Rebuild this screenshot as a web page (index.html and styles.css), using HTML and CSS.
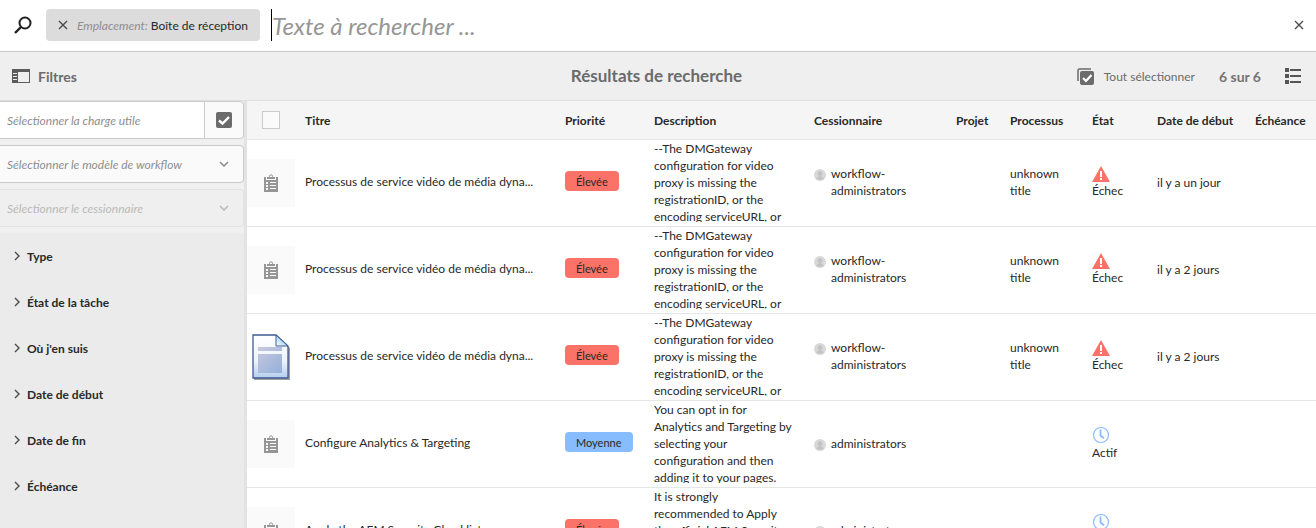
FILE: index.html
```html
<!DOCTYPE html>
<html lang="fr">
<head>
<meta charset="utf-8">
<title>Résultats de recherche</title>
<meta name="viewport" content="width=device-width, initial-scale=1">
<link rel="stylesheet" href="styles.css">
</head>
<body>
<svg class="defs" aria-hidden="true">
  <symbol id="i-close" viewBox="0 0 10 10"><path d="M1 1l8 8M9 1l-8 8" fill="none" stroke="currentColor" stroke-width="1.4"/></symbol>
  <symbol id="i-down" viewBox="0 0 10 6"><path d="M1 1l4 4 4-4" fill="none" stroke="currentColor" stroke-width="1.6"/></symbol>
  <symbol id="i-right" viewBox="0 0 6 10"><path d="M1 1l4 4-4 4" fill="none" stroke="currentColor" stroke-width="1.4"/></symbol>
  <symbol id="i-task" viewBox="0 0 14 18"><path fill="currentColor" fill-rule="evenodd" d="M0 3h2v3h10V3h2v15H0zM2 8v2h2V8zm4 0v1h6V8zM2 11v2h2v-2zm4 0v1h6v-1zM2 14v2h2v-2zm4 0v1h6v-1zM3 3h8v2H3z"/><circle cx="7" cy="2.400" r="1.600" fill="none" stroke="currentColor"/></symbol>
  <symbol id="i-alert" viewBox="0 0 18 16"><path fill="currentColor" d="M9 0l9 16H0z"/><path fill="#fff" d="M8 5h2v6H8zM8 12h2v2H8z"/></symbol>
  <symbol id="i-clock" viewBox="0 0 18 18"><circle cx="9" cy="9" r="7.500" fill="none" stroke="currentColor" stroke-width="1.200"/><path d="M8.500 3.500v6l3.500 2.800" fill="none" stroke="currentColor" stroke-width="1.800"/></symbol>
  <symbol id="i-user" viewBox="0 0 12 12"><circle cx="6" cy="6" r="6" fill="#d9d9d9"/><path fill="#c4c4c4" d="M6 2a2.300 2.600 0 0 1 1.300 4.800v1L10 9a5 5 0 0 1-8 0l2.700-1.200v-1A2.300 2.600 0 0 1 6 2z"/></symbol>
</svg>

<header class="search">
  <svg class="search-icon" viewBox="0 0 18 18" aria-hidden="true"><circle cx="11" cy="7" r="5.500" fill="none" stroke="#222" stroke-width="2"/><path d="M7 11l-6 6" stroke="#222" stroke-width="2.400"/></svg>
  <div class="tag">
    <button type="button" class="icon-btn" aria-label="Supprimer"><svg class="x"><use href="#i-close"/></svg></button>
    <span><em>Emplacement:</em> Boîte de réception</span>
  </div>
  <input class="query" type="text" aria-label="Recherche" placeholder="Texte à rechercher ...">
  <button type="button" class="icon-btn" aria-label="Fermer"><svg class="x"><use href="#i-close"/></svg></button>
</header>

<div class="bar">
  <button type="button" class="toggle">
    <svg class="rail" viewBox="0 0 18 14" aria-hidden="true"><path fill="#5c5c5c" fill-rule="evenodd" d="M0 0h18v14H0zM6 3v10h11V3z"/><path stroke="#efefef" d="M1 4.500h4M1 7.500h4M1 10.500h4"/></svg>
    Filtres
  </button>
  <h1>Résultats de recherche</h1>
  <div class="tools">
    <button type="button" class="select-all">
      <svg class="multi" viewBox="0 0 17 17" aria-hidden="true"><path d="M1 13V2.500A1.500 1.500 0 0 1 2.500 1H14" fill="none" stroke="#6b6b6b" stroke-width="1.500"/><rect x="3" y="3" width="14" height="14" rx="2" fill="#6b6b6b"/><path d="M6 10l3 3 5.500-6" fill="none" stroke="#fff" stroke-width="2.200"/></svg>
      Tout sélectionner
    </button>
    <strong>6 sur 6</strong>
    <button type="button" class="icon-btn" aria-label="Vue Liste"><svg class="list" viewBox="0 0 16 16"><path fill="#555" d="M0 0h4v4H0zM0 6h4v4H0zM0 12h4v4H0zM5 1h11v2H5zM5 7h11v2H5zM5 13h11v2H5z"/></svg></button>
  </div>
</div>

<main class="layout">
  <aside class="filters">
    <div class="fields">
      <div class="field path">
        <input type="text" aria-label="Charge utile" placeholder="Sélectionner la charge utile">
        <button type="button" aria-label="Parcourir"><svg class="check" viewBox="0 0 16 16"><rect width="16" height="16" rx="2" fill="#6b6b6b"/><path d="M3 8.500l3.500 3L13 5" fill="none" stroke="#fff" stroke-width="2.400"/></svg></button>
      </div>
      <div class="field pick">
        <select aria-label="Modèle de workflow"><option>Sélectionner le modèle de workflow</option></select>
        <svg class="down" viewBox="0 0 10 6" aria-hidden="true"><use href="#i-down"/></svg>
      </div>
      <div class="field pick disabled">
        <select aria-label="Cessionnaire" disabled><option>Sélectionner le cessionnaire</option></select>
        <svg class="down" viewBox="0 0 10 6" aria-hidden="true"><use href="#i-down"/></svg>
      </div>
    </div>
    <details><summary><svg class="right"><use href="#i-right"/></svg>Type</summary></details>
    <details><summary><svg class="right"><use href="#i-right"/></svg>État de la tâche</summary></details>
    <details><summary><svg class="right"><use href="#i-right"/></svg>Où j'en suis</summary></details>
    <details><summary><svg class="right"><use href="#i-right"/></svg>Date de début</summary></details>
    <details><summary><svg class="right"><use href="#i-right"/></svg>Date de fin</summary></details>
    <details><summary><svg class="right"><use href="#i-right"/></svg>Échéance</summary></details>
  </aside>

  <section class="results">
    <table>
      <colgroup><col class="c-pick"><col class="c-title"><col class="c-prio"><col class="c-desc"><col class="c-who"><col class="c-proj"><col class="c-proc"><col class="c-state"><col class="c-start"><col class="c-due"></colgroup>
      <thead>
        <tr><th class="pick-cell"><input type="checkbox" aria-label="Tout sélectionner"></th><th>Titre</th><th>Priorité</th><th>Description</th><th>Cessionnaire</th><th>Projet</th><th>Processus</th><th>État</th><th>Date de début</th><th>Échéance</th></tr>
      </thead>
      <tbody>
        <tr>
          <td class="pick-cell"><div class="thumb"><svg class="task"><use href="#i-task"/></svg></div></td>
          <td class="title">Processus de service vidéo de média dyna...</td>
          <td class="prio"><span class="badge high">Élevée</span></td>
          <td class="desc"><div>--The DMGateway configuration for video proxy is missing the registrationID, or the encoding serviceURL, or</div></td>
          <td><div class="who"><svg class="user"><use href="#i-user"/></svg><span>workflow-administrators</span></div></td>
          <td></td><td>unknown title</td>
          <td><div class="state"><svg class="alert" viewBox="0 0 18 16"><use href="#i-alert"/></svg>Échec</div></td>
          <td class="date">il y a un jour</td><td></td>
        </tr>
        <tr>
          <td class="pick-cell"><div class="thumb"><svg class="task"><use href="#i-task"/></svg></div></td>
          <td class="title">Processus de service vidéo de média dyna...</td>
          <td class="prio"><span class="badge high">Élevée</span></td>
          <td class="desc"><div>--The DMGateway configuration for video proxy is missing the registrationID, or the encoding serviceURL, or</div></td>
          <td><div class="who"><svg class="user"><use href="#i-user"/></svg><span>workflow-administrators</span></div></td>
          <td></td><td>unknown title</td>
          <td><div class="state"><svg class="alert" viewBox="0 0 18 16"><use href="#i-alert"/></svg>Échec</div></td>
          <td class="date">il y a 2 jours</td><td></td>
        </tr>
        <tr>
          <td class="pick-cell"><div class="thumb plain">
            <svg class="page" viewBox="0 0 38 46">
              <defs>
                <linearGradient id="paper" x1="0" y1="0" x2="0" y2="1"><stop offset="0" stop-color="#fff"/><stop offset=".6" stop-color="#eef4fb"/><stop offset="1" stop-color="#b4cdec"/></linearGradient>
                <linearGradient id="block" gradientUnits="userSpaceOnUse" x1="6" y1="13" x2="30" y2="39"><stop offset="0" stop-color="#c9c9de"/><stop offset="1" stop-color="#94b0dc"/></linearGradient>
                <linearGradient id="fold" x1="0" y1="1" x2="1" y2="0"><stop offset="0" stop-color="#fff"/><stop offset="1" stop-color="#5fb4e4"/></linearGradient>
              </defs>
              <path d="M2 2h23l13 12v32H2z" fill="#888" opacity=".8"/>
              <path d="M1 1h23l12 11v32H1z" fill="url(#paper)" stroke="#3f5a94" stroke-width="1.300"/>
              <path d="M24 1v11h12z" fill="url(#fold)" stroke="#3f5a94"/>
              <path d="M6 13h24v4H6zM6 20h24v19H6z" fill="url(#block)"/>
            </svg></div></td>
          <td class="title">Processus de service vidéo de média dyna...</td>
          <td class="prio"><span class="badge high">Élevée</span></td>
          <td class="desc"><div>--The DMGateway configuration for video proxy is missing the registrationID, or the encoding serviceURL, or</div></td>
          <td><div class="who"><svg class="user"><use href="#i-user"/></svg><span>workflow-administrators</span></div></td>
          <td></td><td>unknown title</td>
          <td><div class="state"><svg class="alert" viewBox="0 0 18 16"><use href="#i-alert"/></svg>Échec</div></td>
          <td class="date">il y a 2 jours</td><td></td>
        </tr>
        <tr>
          <td class="pick-cell"><div class="thumb"><svg class="task"><use href="#i-task"/></svg></div></td>
          <td class="title">Configure Analytics &amp; Targeting</td>
          <td class="prio"><span class="badge medium">Moyenne</span></td>
          <td class="desc"><div>You can opt in for Analytics and Targeting by selecting your configuration and then adding it to your pages.</div></td>
          <td><div class="who"><svg class="user"><use href="#i-user"/></svg><span>administrators</span></div></td>
          <td></td><td></td>
          <td><div class="state"><svg class="clock"><use href="#i-clock"/></svg>Actif</div></td>
          <td></td><td></td>
        </tr>
        <tr>
          <td class="pick-cell"><div class="thumb"><svg class="task"><use href="#i-task"/></svg></div></td>
          <td class="title">Apply the AEM Security Checklist</td>
          <td class="prio"><span class="badge high">Élevée</span></td>
          <td class="desc"><div>It is strongly recommended to Apply the official AEM Security Checklist</div></td>
          <td><div class="who"><svg class="user"><use href="#i-user"/></svg><span>administrators</span></div></td>
          <td></td><td></td>
          <td><div class="state"><svg class="clock"><use href="#i-clock"/></svg>Actif</div></td>
          <td></td><td></td>
        </tr>
      </tbody>
    </table>
  </section>
</main>
</body>
</html>
```
FILE: styles.css
```css
* { box-sizing: border-box; }
body {
  margin: 0;
  height: 100vh;
  display: flex;
  flex-direction: column;
  overflow: hidden;
  background: #fff;
  color: #282828;
  font: 12px/17px Lato, "Open Sans", sans-serif;
}
button, input, select { font: inherit; color: inherit; margin: 0; }
button { border: 0; padding: 0; background: none; }
svg { display: block; flex: none; }
.defs { position: absolute; width: 0; height: 0; }
.icon-btn { display: flex; }

.search {
  display: flex;
  align-items: center;
  padding: 0 12px 1px 14px;
  height: 52px;
  flex: none;
  border-bottom: 1px solid #cbcbcb;
}
.search-icon { width: 18px; height: 18px; }
.tag {
  display: flex;
  align-items: center;
  gap: 9px;
  height: 32px;
  margin: 0 11px 0 14px;
  padding: 0 12px;
  border-radius: 4px;
  background: #dcdcdc;
  white-space: nowrap;
}
.tag em { color: #8e8e8e; }
.x { width: 10px; height: 10px; color: #4b4b4b; }
.query {
  flex: 1;
  min-width: 0;
  height: 32px;
  padding: 0;
  border: 0;
  border-left: 1px solid #000;
  outline: 0;
  background: none;
  font-size: 24px;
}
.query::placeholder { color: #969696; font-style: italic; opacity: 1; }

.bar {
  display: grid;
  grid-template-columns: 1fr auto 1fr;
  align-items: center;
  height: 49px;
  flex: none;
  padding: 0 15px 0 12px;
  border-bottom: 1px solid #dfdfdf;
  background: #efefef;
  color: #6b6b6b;
}
.toggle { display: flex; align-items: center; gap: 8px; font-weight: 700; font-size: 14px; }
.rail { width: 18px; height: 14px; }
h1 { margin: 0; font-size: 17px; line-height: 24px; font-weight: 700; }
.tools { display: flex; align-items: center; justify-content: flex-end; gap: 24px; }
.tools strong { font-size: 14px; font-weight: 700; color: #747474; }
.select-all { display: flex; align-items: center; gap: 10px; }
.multi { width: 17px; height: 17px; }
.list { width: 16px; height: 16px; }

.layout { flex: 1; display: flex; min-height: 0; }
.filters {
  flex: none;
  width: 247px;
  border-right: 3px solid #e3e3e3;
  background: #ebebeb;
}
.fields { display: grid; gap: 6px; padding-bottom: 6px; background: #f0f0f0; }
.field {
  display: grid;
  height: 38px;
  border: 1px solid #cbcbcb;
  border-left: 0;
  border-radius: 0 4px 4px 0;
  background: #fafafa;
  overflow: hidden;
}
.path { grid-template-columns: 1fr 38px; }
.path input {
  min-width: 0;
  padding: 0 7px;
  border: 0;
  border-right: 1px solid #cbcbcb;
  background: #fff;
}
.path input::placeholder { color: #8e8e8e; font-style: italic; opacity: 1; }
.path button { display: grid; place-items: center; }
.check { width: 16px; height: 16px; }
.pick { align-items: center; }
.pick > * { grid-area: 1 / 1; }
.pick select {
  width: 100%;
  height: 36px;
  padding: 0 30px 0 7px;
  border: 0;
  appearance: none;
  background: none;
  color: #8e8e8e;
  font-style: italic;
}
.down { justify-self: end; width: 10px; height: 6px; margin-right: 14px; color: #8e8e8e; pointer-events: none; }
.disabled { background: #efefef; border-color: #e3e3e3; }
.disabled select, .disabled .down { color: #b9b9b9; opacity: 1; }
summary {
  display: flex;
  align-items: center;
  gap: 7px;
  height: 46px;
  padding-left: 14px;
  font-weight: 700;
  list-style: none;
}
.right { width: 6px; height: 10px; color: #4b4b4b; }

.results { flex: 1; min-width: 0; overflow: auto; scrollbar-width: none; }
table { width: 100%; table-layout: fixed; border-collapse: separate; border-spacing: 0; }
.c-pick { width: 48px; }
.c-prio { width: 89px; }
.c-desc { width: 160px; }
.c-who { width: 142px; }
.c-proj { width: 54px; }
.c-proc { width: 82px; }
.c-state { width: 65px; }
.c-start { width: 98px; }
.c-due { width: 71px; }
th {
  height: 39px;
  padding: 0 0 0 10px;
  border-bottom: 1px solid #e6e6e6;
  background: #f5f5f5;
  text-align: left;
  font-weight: 700;
  white-space: nowrap;
}
td { height: 87px; padding: 0 10px 2px; border-bottom: 1px solid #e6e6e6; }
th.pick-cell, td.pick-cell { padding: 0; }
th input {
  display: block;
  appearance: none;
  width: 18px;
  height: 18px;
  margin: 0 auto;
  border: 1px solid #cbcbcb;
  background: #fafafa;
}
.thumb { display: grid; place-items: center; height: 48px; background: #fafafa; }
.plain { background: none; }
.task { width: 14px; height: 18px; color: #969696; }
.page { width: 38px; height: 46px; }
td.title { padding: 0 0 4px 10px; overflow: hidden; text-overflow: ellipsis; white-space: nowrap; }
td.prio { padding-bottom: 4px; }
.badge {
  display: block;
  width: fit-content;
  height: 20px;
  padding: 1px 11px 0;
  border-radius: 4px;
  font-size: 11px;
  line-height: 20px;
}
.high { background: #fa7268; }
.medium { background: #87bcff; }
td.desc { vertical-align: top; }
.desc div { height: 82px; overflow: hidden; }
.who { display: grid; grid-template-columns: 12px 1fr; column-gap: 5px; }
.user { width: 12px; height: 12px; margin-top: 4px; }
.state { display: grid; }
.alert, .clock { width: 18px; }
.alert { height: 16px; color: #fa7268; }
.clock { height: 18px; color: #87bcff; }
td.date { padding-right: 0; }
```
